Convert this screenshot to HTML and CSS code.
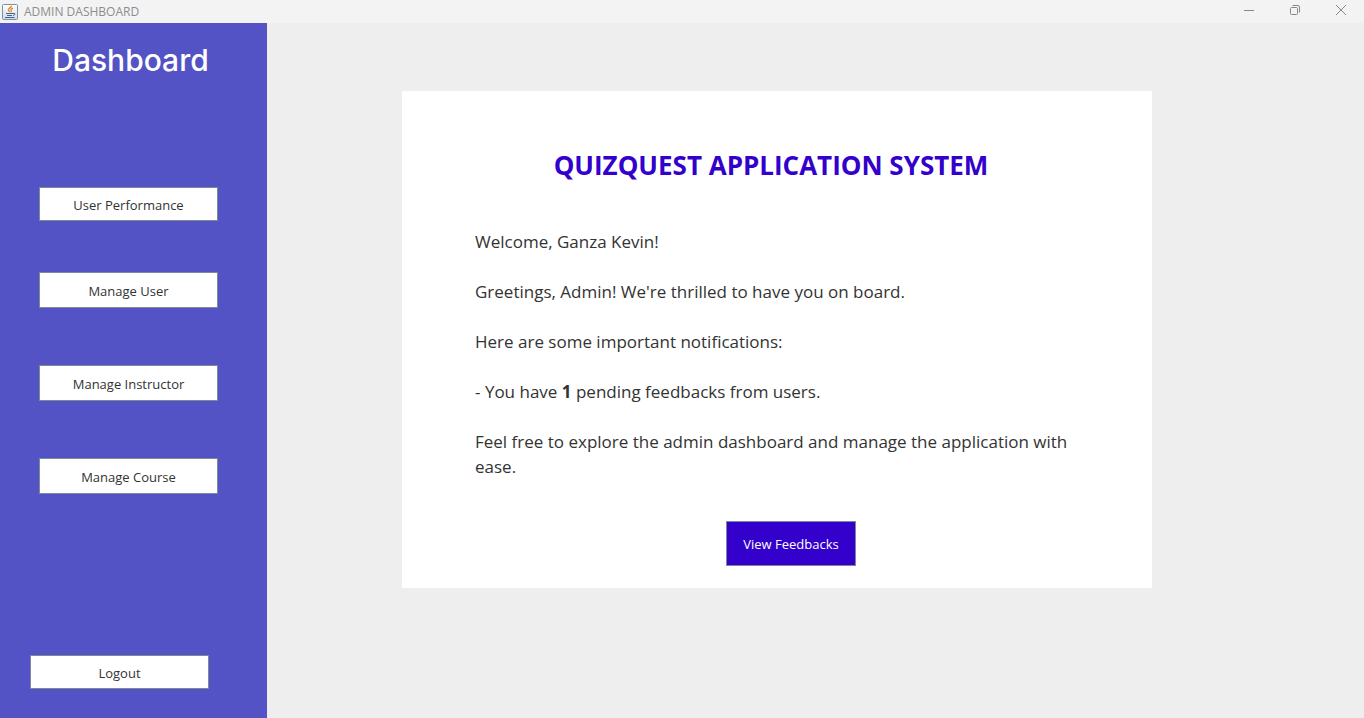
FILE: index.html
```html
<!DOCTYPE html>
<html lang="en">
<head>
<meta charset="utf-8">
<title>ADMIN DASHBOARD</title>
<link rel="stylesheet" href="styles.css">
</head>
<body>
<header class="titlebar">
  <svg class="app-icon" viewBox="0 0 16 16" aria-hidden="true">
    <defs><linearGradient id="tile" x1="0" y1="0" x2="0" y2="1"><stop offset="0" stop-color="#fff"/><stop offset="1" stop-color="#d3dbe3"/></linearGradient></defs>
    <rect x=".5" y=".5" width="15" height="15" rx="1" fill="url(#tile)" stroke="#7890a8"/>
    <path d="M9.300 1.700c.8 2-3.600 2.400-2.900 4.300.3.700.9 1.100 1.200 1.900M11 4.200c-1.800.6-2.600 1.300-1.900 2.200.4.600.1 1.100-.4 1.500" fill="none" stroke="#ec8224" stroke-width="1.300"/>
    <path d="M4 9.500h7M5 11.500h5M3 13.500h9.500M11 9.500c2.700-.8 2.400 1.600 0 2" fill="none" stroke="#39658f"/>
  </svg>
  <span class="window-title">ADMIN DASHBOARD</span>
  <div class="window-controls">
    <button class="window-button" aria-label="Minimize"><svg viewBox="0 0 12 12"><path d="M1 6.500h10"/></svg></button>
    <button class="window-button" aria-label="Restore"><svg viewBox="0 0 12 12"><rect x="1.500" y="3.500" width="7" height="7" rx="1"/><path d="M3.500 1.500H9a1.500 1.500 0 0 1 1.500 1.500v5.500"/></svg></button>
    <button class="window-button" aria-label="Close"><svg viewBox="0 0 12 12"><path d="M1 1l10 10M11 1L1 11"/></svg></button>
  </div>
</header>
<div class="workspace">
  <aside class="sidebar">
    <h1 class="sidebar-title">Dashboard</h1>
    <nav class="menu">
      <button class="menu-button menu-button-first">User Performance</button>
      <button class="menu-button">Manage User</button>
      <button class="menu-button">Manage Instructor</button>
      <button class="menu-button">Manage Course</button>
    </nav>
    <button class="menu-button logout">Logout</button>
  </aside>
  <main class="content">
    <section class="card">
      <h2 class="card-title">QUIZQUEST APPLICATION SYSTEM</h2>
      <div class="message">
        <p>Welcome, Ganza Kevin!</p>
        <p>Greetings, Admin! We're thrilled to have you on board.</p>
        <p>Here are some important notifications:</p>
        <p>- You have <b>1</b> pending feedbacks from users.</p>
        <p>Feel free to explore the admin dashboard and manage the application with ease.</p>
      </div>
      <button class="feedback-button">View Feedbacks</button>
    </section>
  </main>
</div>
</body>
</html>
```
FILE: styles.css
```css
* { box-sizing: border-box; }
body {
  margin: 0;
  min-height: 100vh;
  display: flex;
  flex-direction: column;
  background: #eeeeee;
  color: #333333;
  font-family: "Open Sans", "Noto Sans", sans-serif;
}
button { font-family: inherit; }
.titlebar {
  display: flex;
  align-items: center;
  height: 23px;
  padding: 0 0 0 2px;
  background: #f3f3f3;
}
.app-icon { width: 16px; height: 16px; margin-right: 6px; }
.window-title { flex: 1; color: #8d8d8d; font-size: 12px; line-height: 22px; }
.window-controls { display: flex; align-items: flex-start; height: 100%; }
.window-button {
  display: flex;
  align-items: center;
  justify-content: center;
  width: 46px;
  height: 20px;
  padding: 0;
  border: 0;
  background: transparent;
}
.window-button svg { width: 12px; height: 12px; fill: none; stroke: #888888; }
.workspace { flex: 1; display: flex; }
.sidebar {
  flex: none;
  display: flex;
  flex-direction: column;
  width: 267px;
  padding: 18px 30px 29px;
  background: #5353c5;
}
.sidebar-title {
  margin: 0 6px 0 0;
  color: #ffffff;
  font: 500 30px/38px Inter, "Liberation Sans", sans-serif;
  text-align: center;
}
.menu {
  display: flex;
  flex-direction: column;
  gap: 57px;
  margin: 108px 0 40px 9px;
}
.menu-button {
  width: 179px;
  height: 36px;
  padding: 1px 0 0;
  border: 1px solid #7a8a99;
  background: #ffffff;
  color: #333333;
  font-size: 13px;
  line-height: 20px;
}
.menu-button-first { height: 34px; margin-bottom: -6px; }
.logout { height: 34px; margin-top: auto; }
.content {
  flex: 1;
  display: grid;
  grid-template-columns: 135fr 750fr 212fr;
  align-items: start;
  padding: 68px 0;
}
.card {
  grid-column: 2;
  padding: 56px 73px 22px;
  background: #ffffff;
}
.card-title {
  margin: 0 12px 46px 0;
  color: #3300cc;
  font-size: 26px;
  line-height: 36px;
  text-align: center;
}
.message { font-size: 17px; line-height: 25px; }
.message p { margin: 0 0 25px; }
.feedback-button {
  display: block;
  width: 130px;
  height: 45px;
  margin: 42px auto 0 calc(50% - 51px);
  padding: 0;
  border: 1px solid #7a8a99;
  background: #3300cc;
  color: #ffffff;
  font-size: 13px;
}
```
